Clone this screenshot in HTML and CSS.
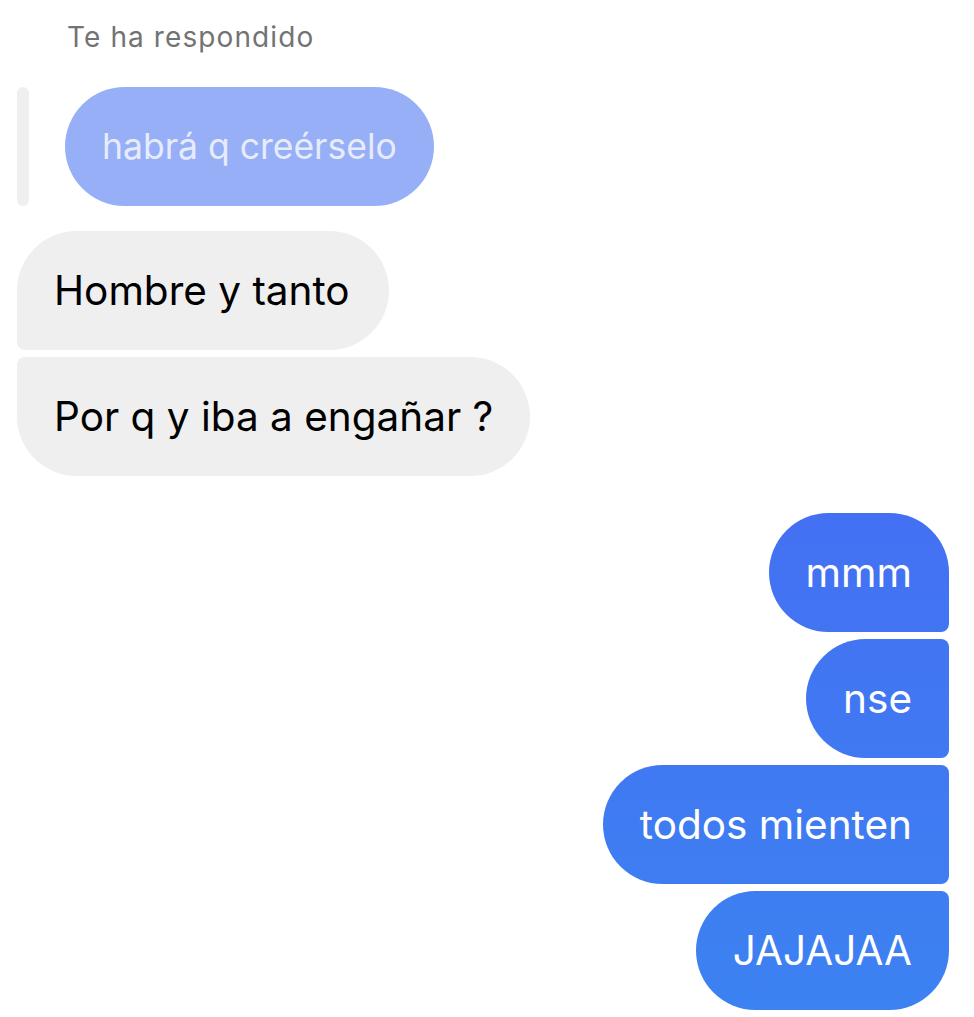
FILE: index.html
```html
<!DOCTYPE html>
<html lang="es">
<head>
<meta charset="utf-8">
<link rel="stylesheet" href="styles.css">
</head>
<body>
<div class="chat">
  <div class="reply-label">Te ha respondido</div>
  <div class="reply-row">
    <div class="reply-bar"></div>
    <div class="bubble reply">habrá q creérselo</div>
  </div>
  <div class="group in">
    <div class="bubble gray first">Hombre y tanto</div>
    <div class="bubble gray last">Por q y iba a engañar ?</div>
  </div>
  <div class="group out">
    <div class="bubble blue first">mmm</div>
    <div class="bubble blue mid">nse</div>
    <div class="bubble blue mid">todos mienten</div>
    <div class="bubble blue last">JAJAJAA</div>
  </div>
</div>
</body>
</html>
```
FILE: styles.css
```css
html, body {
  margin: 0;
  padding: 0;
  background: #ffffff;
}
body {
  font-family: Inter, "Liberation Sans", sans-serif;
  width: 974px;
  height: 1017px;
  overflow: hidden;
}
.chat {
  padding: 20px 25px 0 17px;
  display: flex;
  flex-direction: column;
}
.reply-label {
  margin-left: 50px;
  font-size: 28px;
  line-height: 34px;
  color: #737373;
  letter-spacing: 1.1px;
}
.reply-row {
  margin-top: 33px;
  display: flex;
  gap: 36px;
  align-items: stretch;
}
.reply-bar {
  width: 12px;
  border-radius: 6px;
  background: #efefef;
}
.bubble {
  height: 119px;
  display: flex;
  align-items: center;
  padding: 0 37px;
  box-sizing: border-box;
  font-size: 40.5px;
  white-space: nowrap;
}
.reply {
  background: #97aff6;
  color: #e6ecfc;
  border-radius: 60px;
  font-size: 35.5px;
}
.group {
  display: flex;
  flex-direction: column;
  gap: 7px;
}
.group.in {
  margin-top: 25px;
  align-items: flex-start;
}
.group.out {
  margin-top: 37px;
  align-items: flex-end;
}
.gray {
  background: #efefef;
  color: #000000;
}
.gray.first { border-radius: 60px 60px 60px 8px; padding-right: 39px; }
.gray.last { border-radius: 8px 60px 60px 60px; }
.blue {
  color: #ffffff;
  background: linear-gradient(to bottom, #4470f3 500px, #3c82f1 1017px);
  background-attachment: fixed;
}
.blue.first { border-radius: 60px 60px 8px 60px; }
.blue.mid { border-radius: 60px 8px 8px 60px; }
.blue.last { border-radius: 60px 8px 60px 60px; }
```
